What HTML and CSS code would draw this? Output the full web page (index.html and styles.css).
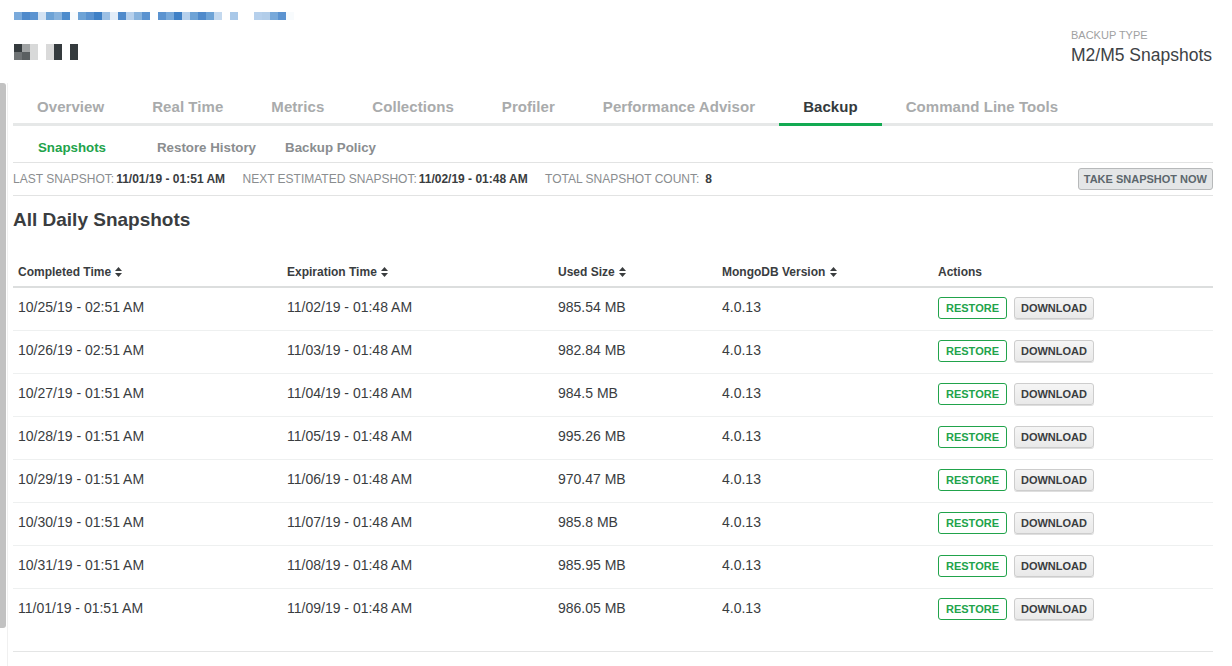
FILE: index.html
```html
<!DOCTYPE html>
<html lang="en">
<head>
<meta charset="utf-8">
<title>Backup - Snapshots</title>
<link rel="stylesheet" href="styles.css">
</head>
<body>
<header class="header">
  <div class="redacted">
    <div class="redacted__title"></div>
    <div class="redacted__name">
      <div class="redacted__name-top"></div>
      <div class="redacted__name-bottom"></div>
    </div>
  </div>
  <div class="backup-type">
    <div class="backup-type__label">BACKUP TYPE</div>
    <div class="backup-type__value">M2/M5 Snapshots</div>
  </div>
</header>
<div class="layout">
  <div class="rail"><div class="rail__thumb"></div></div>
  <main class="main">
    <nav class="tabs">
      <a class="tab">Overview</a>
      <a class="tab">Real Time</a>
      <a class="tab">Metrics</a>
      <a class="tab">Collections</a>
      <a class="tab">Profiler</a>
      <a class="tab">Performance Advisor</a>
      <a class="tab tab--active">Backup</a>
      <a class="tab">Command Line Tools</a>
    </nav>
    <nav class="subtabs">
      <a class="subtab subtab--active">Snapshots</a>
      <a class="subtab">Restore History</a>
      <a class="subtab">Backup Policy</a>
    </nav>
    <div class="summary">
      <div class="summary__items">
        <span class="summary__label">LAST SNAPSHOT:</span><span class="summary__value">11/01/19 - 01:51 AM</span>
        <span class="summary__label summary__label--spaced">NEXT ESTIMATED SNAPSHOT:</span><span class="summary__value">11/02/19 - 01:48 AM</span>
        <span class="summary__label summary__label--spaced">TOTAL SNAPSHOT COUNT:</span><span class="summary__value summary__value--count">8</span>
      </div>
      <button class="btn btn--snapshot">TAKE SNAPSHOT NOW</button>
    </div>
    <h2 class="heading">All Daily Snapshots</h2>
    <table class="snapshots">
      <colgroup>
        <col class="col-completed"><col class="col-expiration"><col class="col-size"><col class="col-version"><col>
      </colgroup>
      <thead>
        <tr>
          <th>Completed Time <svg class="sort" width="7" height="10" viewBox="0 0 7 10"><path d="M3.5 0 L7 4 H0 Z M0 6 H7 L3.5 10 Z"/></svg></th>
          <th>Expiration Time <svg class="sort" width="7" height="10" viewBox="0 0 7 10"><path d="M3.5 0 L7 4 H0 Z M0 6 H7 L3.5 10 Z"/></svg></th>
          <th>Used Size <svg class="sort" width="7" height="10" viewBox="0 0 7 10"><path d="M3.5 0 L7 4 H0 Z M0 6 H7 L3.5 10 Z"/></svg></th>
          <th>MongoDB Version <svg class="sort" width="7" height="10" viewBox="0 0 7 10"><path d="M3.5 0 L7 4 H0 Z M0 6 H7 L3.5 10 Z"/></svg></th>
          <th>Actions</th>
        </tr>
      </thead>
      <tbody>
        <tr><td>10/25/19 - 02:51 AM</td><td>11/02/19 - 01:48 AM</td><td>985.54 MB</td><td>4.0.13</td><td><button class="btn btn--restore">RESTORE</button><button class="btn btn--download">DOWNLOAD</button></td></tr>
        <tr><td>10/26/19 - 02:51 AM</td><td>11/03/19 - 01:48 AM</td><td>982.84 MB</td><td>4.0.13</td><td><button class="btn btn--restore">RESTORE</button><button class="btn btn--download">DOWNLOAD</button></td></tr>
        <tr><td>10/27/19 - 01:51 AM</td><td>11/04/19 - 01:48 AM</td><td>984.5 MB</td><td>4.0.13</td><td><button class="btn btn--restore">RESTORE</button><button class="btn btn--download">DOWNLOAD</button></td></tr>
        <tr><td>10/28/19 - 01:51 AM</td><td>11/05/19 - 01:48 AM</td><td>995.26 MB</td><td>4.0.13</td><td><button class="btn btn--restore">RESTORE</button><button class="btn btn--download">DOWNLOAD</button></td></tr>
        <tr><td>10/29/19 - 01:51 AM</td><td>11/06/19 - 01:48 AM</td><td>970.47 MB</td><td>4.0.13</td><td><button class="btn btn--restore">RESTORE</button><button class="btn btn--download">DOWNLOAD</button></td></tr>
        <tr><td>10/30/19 - 01:51 AM</td><td>11/07/19 - 01:48 AM</td><td>985.8 MB</td><td>4.0.13</td><td><button class="btn btn--restore">RESTORE</button><button class="btn btn--download">DOWNLOAD</button></td></tr>
        <tr><td>10/31/19 - 01:51 AM</td><td>11/08/19 - 01:48 AM</td><td>985.95 MB</td><td>4.0.13</td><td><button class="btn btn--restore">RESTORE</button><button class="btn btn--download">DOWNLOAD</button></td></tr>
        <tr><td>11/01/19 - 01:51 AM</td><td>11/09/19 - 01:48 AM</td><td>986.05 MB</td><td>4.0.13</td><td><button class="btn btn--restore">RESTORE</button><button class="btn btn--download">DOWNLOAD</button></td></tr>
      </tbody>
    </table>
    <div class="table-footer"></div>
  </main>
</div>
</body>
</html>
```
FILE: styles.css
```css
* { box-sizing: border-box; }

html, body {
  margin: 0;
  padding: 0;
  background: #fff;
  overflow: hidden;
}

body {
  font-family: "Liberation Sans", Arial, sans-serif;
  color: #3a3d3f;
  width: 1232px;
  height: 666px;
}

/* ---------- header ---------- */
.header {
  height: 83px;
  display: flex;
  justify-content: space-between;
  padding: 12px 19px 0 14px;
}

.redacted__title {
  width: 280px;
  height: 8px;
  background: linear-gradient(to right,
    #7aaadb 0 8px, #4f8acb 8px 16px, #5b93d0 16px 24px, #d4e3f3 24px 32px,
    #6ea3d6 32px 40px, #88b3dd 40px 48px, #4e8ccc 48px 56px, #f8fbfd 56px 64px,
    #6ea3d6 64px 72px, #5b93d0 72px 80px, #3f80c6 80px 88px, #9dc0e4 88px 96px,
    #e3edf8 96px 104px, #4f8acb 104px 112px, #b6d0ec 112px 120px, #88b3dd 120px 128px,
    #5b93d0 128px 136px, #fff 136px 144px, #5b93d0 144px 152px, #78a9da 152px 160px,
    #3f80c6 160px 168px, #b6d0ec 168px 176px, #6ea3d6 176px 184px, #4f8acb 184px 192px,
    #6ea3d6 192px 200px, #c4d9ef 200px 208px, #fff 208px 216px, #a9c8e8 216px 224px,
    #fff 224px 240px, #b6d0ec 240px 248px, #b2cde9 248px 256px, #78a9da 256px 264px,
    #5b93d0 264px 272px, #f8fbfd 272px 280px);
}

.redacted__name {
  margin-top: 24px;
  width: 64px;
}

.redacted__name-top,
.redacted__name-bottom {
  height: 8px;
}

.redacted__name-top {
  background: linear-gradient(to right,
    #353b3e 0 8px, #a0a3a4 8px 16px, #d8d9d9 16px 24px, #fff 24px 32px,
    #dadada 32px 40px, #353b3e 40px 48px, #fff 48px 56px, #353b3e 56px 64px);
}

.redacted__name-bottom {
  background: linear-gradient(to right,
    #6f7375 0 8px, #5a5f61 8px 16px, #d8d9d9 16px 24px, #fff 24px 32px,
    #dadada 32px 40px, #353b3e 40px 48px, #fff 48px 56px, #353b3e 56px 64px);
}

.backup-type {
  margin-top: 17px;
  width: 142px;
}

.backup-type__label {
  font-size: 11px;
  line-height: 13px;
  color: #9fa1a2;
}

.backup-type__value {
  margin-top: 2px;
  font-size: 17.5px;
  line-height: 22px;
  color: #3d4245;
  white-space: nowrap;
}

/* ---------- layout ---------- */
.layout {
  display: flex;
  height: 583px;
}

.rail {
  width: 8px;
  flex: none;
  border-right: 1px solid #f0f0f0;
}

.rail__thumb {
  width: 6px;
  height: 545px;
  background: #c2c2c2;
  border-radius: 0 3px 3px 0;
}

.main {
  margin-left: 5px;
  width: 1200px;
}

/* ---------- tabs ---------- */
.tabs {
  display: flex;
  border-bottom: 3px solid #e6e8e8;
}

.tab {
  padding: 14px 24px 6px;
  line-height: 20px;
  font-size: 15px;
  font-weight: 700;
  letter-spacing: 0.06px;
  color: #a9abac;
  margin-bottom: -3px;
  border-bottom: 3px solid transparent;
  white-space: nowrap;
}

.tab--active {
  color: #343a3d;
  border-bottom-color: #13aa52;
}

.subtabs {
  display: flex;
  padding: 14px 0 6px 10px;
  border-bottom: 1px solid #e2e3e3;
}

.subtab {
  padding: 0 15px;
  font-size: 13.3px;
  line-height: 16px;
  font-weight: 700;
  color: #8a8d8f;
}

.subtab--active {
  color: #21a34b;
  min-width: 119px;
}

.subtab:last-child {
  margin-left: -1px;
}

/* ---------- summary ---------- */
.summary {
  height: 33px;
  display: flex;
  align-items: center;
  justify-content: space-between;
  border-bottom: 1px solid #e2e3e3;
  font-size: 12px;
}

.summary__label {
  color: #8a8d8f;
}

.summary__label--spaced {
  margin-left: 14px;
}

.summary__value {
  margin-left: 2px;
  color: #3a3d3f;
  font-weight: 700;
  font-size: 12px;
}

.summary__value--count {
  margin-left: 6px;
}

/* ---------- buttons ---------- */
.btn {
  font-family: "Liberation Sans", Arial, sans-serif;
  font-size: 11px;
  font-weight: 700;
  height: 22px;
  line-height: 20px;
  border-radius: 3px;
  cursor: pointer;
  padding: 0 7px;
  vertical-align: middle;
}

.btn--snapshot {
  padding: 0 5px;
  background: #e4e6e7;
  border: 1px solid #b7b9ba;
  color: #5c676d;
}

.btn--restore {
  background: #fff;
  border: 1px solid #21a34b;
  color: #21a34b;
}

.btn--download {
  margin-left: 7px;
  padding: 0 6px;
  background: linear-gradient(#f5f5f5, #e9e9e9);
  border: 1px solid #cdcdcd;
  box-shadow: 0 1px 0 #dedede;
  color: #3a3d3f;
}

/* ---------- table ---------- */
.heading {
  margin: 12px 0 0;
  font-size: 19px;
  line-height: 24px;
  font-weight: 700;
  color: #3a3d3f;
}

.snapshots {
  margin-top: 25px;
  width: 100%;
  border-collapse: collapse;
}

.col-completed { width: 269px; }
.col-expiration { width: 271px; }
.col-size { width: 164px; }
.col-version { width: 216px; }

.snapshots th {
  text-align: left;
  font-size: 12px;
  line-height: 14px;
  font-weight: 700;
  color: #3a3d3f;
  padding: 8px 5px 7px;
  border-bottom: 2px solid #dcdede;
  white-space: nowrap;
}

.sort {
  margin-left: 1px;
  vertical-align: -1px;
  fill: #3a3d3f;
}

.snapshots td {
  height: 43px;
  padding: 0 5px 4px;
  font-size: 14px;
  color: #3a3d3f;
  border-bottom: 1px solid #eef0f0;
  vertical-align: middle;
  white-space: nowrap;
}

.snapshots td:last-child {
  padding-bottom: 2px;
}

.snapshots tbody tr:last-child td {
  border-bottom: none;
}

.table-footer {
  margin-top: 20px;
  border-top: 1px solid #e4e5e5;
}
```
